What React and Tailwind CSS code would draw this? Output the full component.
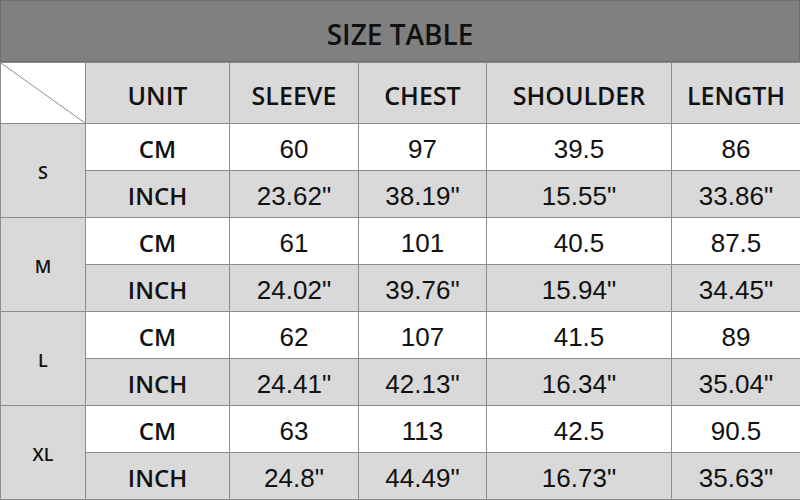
const columns = ['UNIT', 'SLEEVE', 'CHEST', 'SHOULDER', 'LENGTH'];

const sizes = [
  { size: 'S', cm: ['60', '97', '39.5', '86'], inch: ['23.62"', '38.19"', '15.55"', '33.86"'] },
  { size: 'M', cm: ['61', '101', '40.5', '87.5'], inch: ['24.02"', '39.76"', '15.94"', '34.45"'] },
  { size: 'L', cm: ['62', '107', '41.5', '89'], inch: ['24.41"', '42.13"', '16.34"', '35.04"'] },
  { size: 'XL', cm: ['63', '113', '42.5', '90.5'], inch: ['24.8"', '44.49"', '16.73"', '35.63"'] },
];

const headFont = { fontFamily: '"Open Sans", "Noto Sans", sans-serif' };
const numFont = { fontFamily: '"Liberation Sans", Arial, sans-serif' };

export default function App() {
  return (
    <div className="w-[800px] h-[500px] bg-white overflow-hidden">
      {/* title */}
      <div
        className="h-[62px] pt-[5px] bg-[#808080] border border-[#6e6e6e] flex items-center justify-center text-[28px] font-semibold text-[#111]"
        style={headFont}
      >
        SIZE TABLE
      </div>

      <table className="w-[800px] table-fixed border-collapse text-[#111]">
        <colgroup>
          <col className="w-[85px]" />
          <col className="w-[144px]" />
          <col className="w-[129px]" />
          <col className="w-[128px]" />
          <col className="w-[185px]" />
          <col className="w-[129px]" />
        </colgroup>
        <tbody>
          <tr className="h-[61px]">
            <td className="border border-[#8c8c8c] bg-white p-0 relative">
              <svg className="absolute inset-0 w-full h-full" viewBox="0 0 85 61" preserveAspectRatio="none">
                <line x1="0" y1="0" x2="85" y2="61" stroke="#8c8c8c" strokeWidth="1" />
              </svg>
            </td>
            {columns.map((c) => (
              <td
                key={c}
                className="border border-[#8c8c8c] bg-[#d9d9d9] text-center text-[25px] font-semibold p-0 pt-[5px]"
                style={headFont}
              >
                {c}
              </td>
            ))}
          </tr>
          {sizes.map((s) => (
            <>
              <tr key={s.size + 'cm'} className="h-[47px]">
                <td
                  rowSpan={2}
                  className="border border-[#8c8c8c] bg-[#d9d9d9] text-center text-[18px] font-semibold p-0 pt-[4px]"
                  style={headFont}
                >
                  {s.size}
                </td>
                <td className="border border-[#8c8c8c] bg-white text-center text-[24px] font-semibold p-0 pt-[4px]" style={headFont}>
                  CM
                </td>
                {s.cm.map((v, i) => (
                  <td key={i} className="border border-[#8c8c8c] bg-white text-center text-[26px] p-0 pt-[4px]" style={numFont}>
                    {v}
                  </td>
                ))}
              </tr>
              <tr key={s.size + 'in'} className="h-[47px]">
                <td className="border border-[#8c8c8c] bg-[#d9d9d9] text-center text-[24px] font-semibold p-0 pt-[4px]" style={headFont}>
                  INCH
                </td>
                {s.inch.map((v, i) => (
                  <td key={i} className="border border-[#8c8c8c] bg-[#d9d9d9] text-center text-[26px] p-0 pt-[4px]" style={numFont}>
                    {v}
                  </td>
                ))}
              </tr>
            </>
          ))}
        </tbody>
      </table>
    </div>
  );
}
